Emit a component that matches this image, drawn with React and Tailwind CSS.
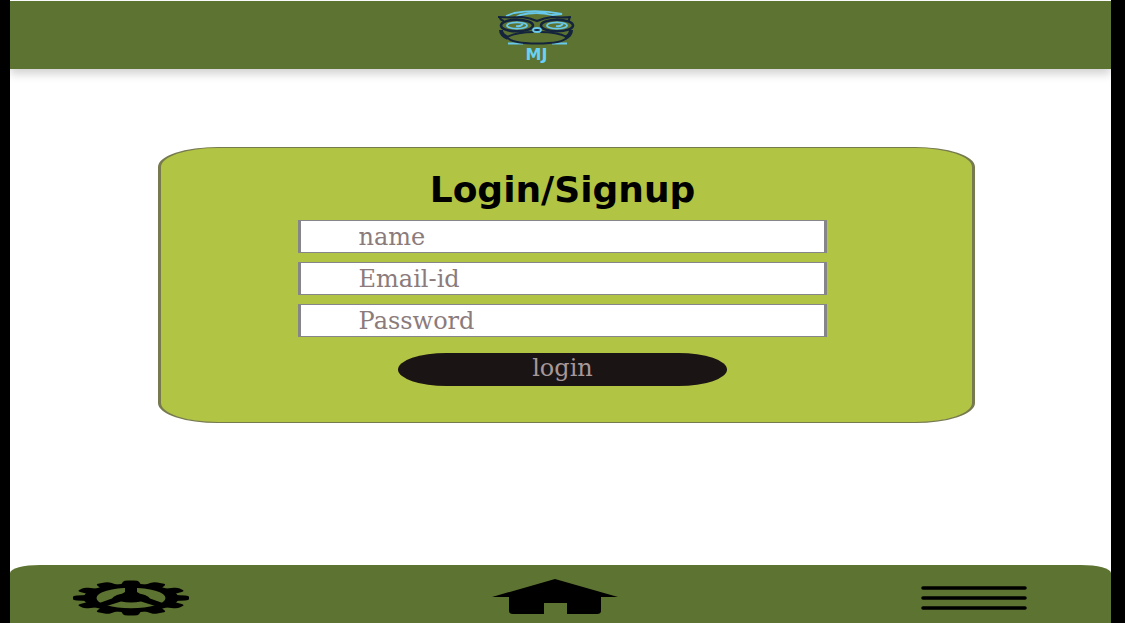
const fieldClass =
  "block h-[33px] w-full border-x-[3px] border-y border-[#85858a] bg-white pl-[58px] pr-4 font-['DejaVu_Serif',serif] text-2xl leading-[30px] text-[#8b7b7b] placeholder:text-[#8b7b7b] placeholder:opacity-100 outline-none";

const fields = [
  { id: "name", type: "text", label: "name" },
  { id: "email", type: "email", label: "Email-id" },
  { id: "password", type: "password", label: "Password" },
];

function OwlLogo() {
  return (
    <svg viewBox="0 0 82 38" className="h-[38px] w-[82px]" aria-hidden="true">
      <g fill="none" stroke="#68c9ed" strokeWidth="1.8">
        <path d="M10 7 L18 4 Q41 0 66 5 L56 6 Q41 2 24 6 L20 8" />
        <path d="M12 34.5 H27 M56 34.5 H71" strokeWidth="2.2" />
        <ellipse cx="21" cy="16.5" rx="10" ry="3.2" />
        <ellipse cx="61" cy="16.5" rx="10" ry="3.2" />
        <path d="M20 17 Q24 18 27 15 M60 17 Q64 18 67 15" />
      </g>
      <g fill="none" stroke="#14243c" strokeWidth="2.2">
        <path d="M2 8 Q16 9 26 8 Q34 9 41 12 Q48 9 56 8 Q66 9 75 8" />
        <path d="M4 8 Q4 11 8 12 M73 8 Q74 11 72 12" />
        <ellipse cx="21" cy="16.5" rx="16" ry="5.8" strokeWidth="2.6" />
        <ellipse cx="61" cy="16.5" rx="16" ry="5.8" strokeWidth="2.6" />
        <path d="M5 21 Q5 26 12 29 M75 21 Q75 26 69 29" strokeWidth="4" />
        <path d="M11 28 Q21 23 38 23 M44 23 Q61 23 71 28 Q68 34.5 41 34.5 Q15 34.5 11 28" strokeWidth="1.8" />
      </g>
      <ellipse cx="41" cy="21" rx="4" ry="2" fill="#14243c" stroke="#68c9ed" strokeWidth="1.8" />
    </svg>
  );
}

function GearIcon() {
  const teeth = Array.from({ length: 12 }, (_, i) => i * 30);
  return (
    <svg viewBox="0 0 116 36" className="h-9 w-[116px]" aria-hidden="true">
      <g transform="translate(58 18) scale(1 .3)">
        {teeth.map((angle) => (
          <path key={angle} d="M-10 -44 L-8 -54 Q-7 -58 -3 -58 H3 Q7 -58 8 -54 L10 -44 Z" transform={`rotate(${angle})`} />
        ))}
        <circle r="41" fill="none" stroke="#000" strokeWidth="13" />
        <path d="M-6 -40 H6 V-20 Q8 -14 14 -10 Q18 -4 19 2 L33 18 L26 28 L10 12 Q0 18 -10 12 L-26 28 L-33 18 L-19 2 Q-18 -4 -14 -10 Q-8 -14 -6 -20 Z" />
      </g>
    </svg>
  );
}

function HomeIcon() {
  return (
    <svg viewBox="0 0 126 38" className="h-[38px] w-[126px]" aria-hidden="true">
      <path d="M63 0 L126 18 H109 V32 Q109 35 105 35 H75 V24 H52 V35 H21 Q17 35 17 32 V18 H0 Z" />
    </svg>
  );
}

function MenuIcon() {
  return (
    <svg viewBox="0 0 106 26" className="h-[26px] w-[106px]" aria-hidden="true">
      <path d="M2 3 H104 M2 13 H104 M2 23 H104" stroke="#000" strokeWidth="3.5" strokeLinecap="round" />
    </svg>
  );
}

export default function App() {
  return (
    <div className="flex min-h-screen flex-col border-l-10 border-r-14 border-black bg-white">
      <header className="mt-px flex h-17 flex-col items-center bg-[#5d7331] pt-2 pr-12 shadow-[0_5px_9px_rgba(0,0,0,0.18)]">
        <OwlLogo />
        <span className="font-['DejaVu_Sans',sans-serif] text-base leading-4 font-bold text-[#68d1f5]">MJ</span>
      </header>

      <main className="flex flex-1 flex-col items-center pt-[78px] pb-10 pl-3">
        <form
          onSubmit={(event) => event.preventDefault()}
          className="flex w-3/4 flex-col items-center rounded-[60px/20px] border-x-[3px] border-y border-[#77794f] bg-[#b2c444] pt-6 pr-2 pb-9"
        >
          <h1 className="font-['DejaVu_Sans',sans-serif] text-4xl leading-9 font-bold text-black">Login/Signup</h1>
          <div className="mt-3 flex w-[66%] flex-col gap-[9px]">
            {fields.map((field) => (
              <input
                key={field.id}
                id={field.id}
                type={field.type}
                aria-label={field.label}
                placeholder={field.label}
                className={fieldClass}
              />
            ))}
          </div>
          <button
            type="submit"
            className="mt-4 h-[33px] w-[41%] rounded-[50px/17px] bg-[#1b1415] pb-1 font-['DejaVu_Serif',serif] text-2xl leading-7 text-[#a69798]"
          >
            login
          </button>
        </form>
      </main>

      <nav className="flex h-[58px] items-center justify-between bg-[#5d7331] pt-2 pr-[84px] pl-[63px] [border-radius:30px_30px_0_0/8px_8px_0_0]">
        <button type="button" aria-label="Settings">
          <GearIcon />
        </button>
        <a href="#home" aria-label="Home">
          <HomeIcon />
        </a>
        <button type="button" aria-label="Menu">
          <MenuIcon />
        </button>
      </nav>
    </div>
  );
}
